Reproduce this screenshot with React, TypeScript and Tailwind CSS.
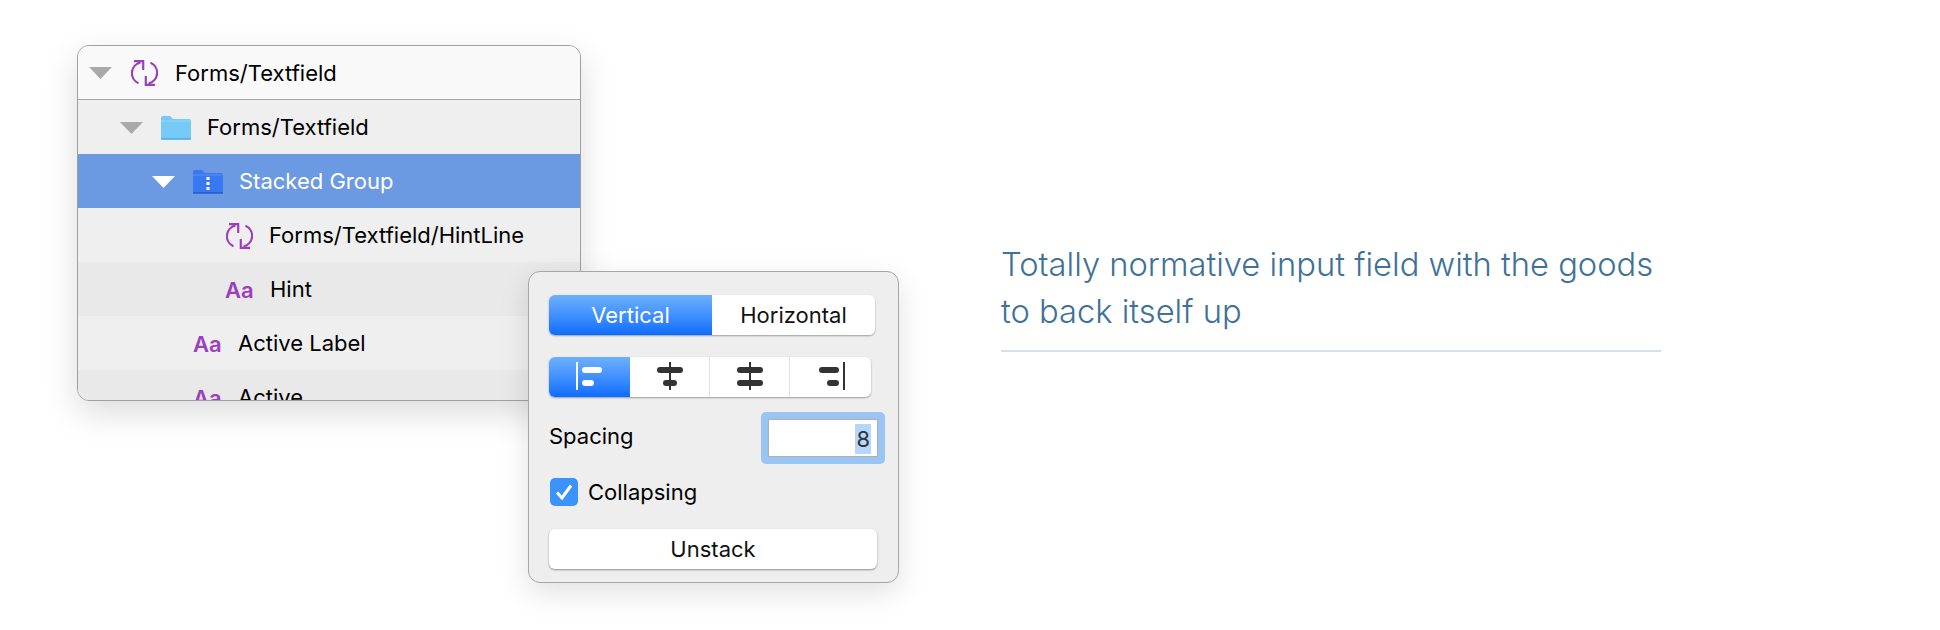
import type { FC, ReactNode } from 'react';

const SyncIcon: FC = () => (
  <svg width="27" height="26" viewBox="0 0 27 26" fill="none" stroke="#9b3fbd" strokeWidth="2.2" className="shrink-0">
    <path d="M9.5 2.4 A 11 11 0 0 0 7.5 23.2" />
    <path d="M3 1.1 H12.2 V10" />
    <path d="M17.5 23.6 A 11 11 0 0 0 19.5 2.8" />
    <path d="M24 24.9 H14.8 V16" />
  </svg>
);

const Caret: FC<{ white?: boolean }> = ({ white }) => (
  <svg width="23" height="12" viewBox="0 0 23 12" className="shrink-0">
    <path d="M0 0 H23 L11.5 12 Z" fill={white ? '#ffffff' : '#a9a9a9'} />
  </svg>
);

const Folder: FC<{ stacked?: boolean }> = ({ stacked }) => (
  <svg width="30" height="24" viewBox="0 0 30 24" className="shrink-0">
    <path
      d="M0 2 Q0 0 2 0 H9 L12 3 H28 Q30 3 30 5 V22 Q30 24 28 24 H2 Q0 24 0 22 Z"
      fill={stacked ? '#3a78f2' : '#75caf8'}
    />
    <path d="M0 5 H30" stroke={stacked ? '#5a8ef5' : '#93d6fa'} strokeWidth="1" />
    <path d="M0 22.8 H30" stroke={stacked ? '#2a5fd0' : '#5ab0e0'} strokeWidth="1.5" />
    {stacked && (
      <g fill="#ffffff">
        <rect x="13.5" y="7" width="3" height="3" />
        <rect x="13.5" y="12" width="3" height="3" />
        <rect x="13.5" y="17" width="3" height="3" />
      </g>
    )}
  </svg>
);

const TextIcon: FC = () => (
  <span className="w-[29px] shrink-0 text-[22px] font-semibold text-[#9b3fbd] leading-none">Aa</span>
);

const Row: FC<{ indent: string; className?: string; text: string; icon: ReactNode; caret?: ReactNode }> = ({
  indent,
  className,
  text,
  icon,
  caret,
}) => (
  <div className={`flex items-center h-[54px] shrink-0 pt-[1px] text-[22px] text-black ${indent} ${className ?? ''}`}>
    {caret && <span className="flex w-[41px] shrink-0">{caret}</span>}
    {icon}
    <span className="ml-[16px] whitespace-nowrap">{text}</span>
  </div>
);

const AlignIcon: FC<{ kind: 'left' | 'c1' | 'c2' | 'right'; light?: boolean }> = ({ kind, light }) => {
  const c = light ? '#ffffff' : '#333333';
  return (
    <svg width="28" height="30" viewBox="0 0 28 30">
      {kind === 'left' && (
        <g fill={c}>
          <rect x="0" y="0" width="2" height="28" />
          <rect x="6" y="5" width="20" height="6" rx="3" />
          <rect x="6" y="18" width="12" height="6" rx="3" />
        </g>
      )}
      {kind === 'c1' && (
        <g fill={c}>
          <rect x="13" y="0" width="2" height="28" />
          <rect x="1" y="5" width="26" height="6" rx="3" />
          <rect x="7" y="18" width="14" height="6" rx="3" />
        </g>
      )}
      {kind === 'c2' && (
        <g fill={c}>
          <rect x="13" y="0" width="2" height="28" />
          <rect x="1" y="5" width="26" height="6" rx="3" />
          <rect x="1" y="18" width="26" height="6" rx="3" />
        </g>
      )}
      {kind === 'right' && (
        <g fill={c}>
          <rect x="26" y="0" width="2" height="28" />
          <rect x="2" y="5" width="20" height="6" rx="3" />
          <rect x="10" y="18" width="12" height="6" rx="3" />
        </g>
      )}
    </svg>
  );
};

const Popover: FC = () => (
  <div className="absolute left-[451px] top-[226px] w-[371px] h-[312px] rounded-[12px] border border-[#a6a6a6] bg-[#eeeeee] shadow-[0_10px_30px_rgba(0,0,0,0.12)] px-[20px] pt-[23px] text-[22px] text-black">
    <div className="flex w-[326px] h-[40px] rounded-[6px] overflow-hidden shadow-[0_1px_2px_rgba(0,0,0,0.35)]">
      <div className="flex w-[163px] items-center justify-center bg-gradient-to-b from-[#6cb0fd] to-[#0a6cff] text-white">Vertical</div>
      <div className="flex flex-1 items-center justify-center bg-white text-[#111111]">Horizontal</div>
    </div>
    <div className="flex w-[322px] h-[40px] mt-[22px] rounded-[6px] overflow-hidden shadow-[0_1px_2px_rgba(0,0,0,0.35)] bg-white">
      <div className="flex w-[81px] items-center justify-center bg-gradient-to-b from-[#6cb0fd] to-[#0a6cff]">
        <AlignIcon kind="left" light />
      </div>
      <div className="flex w-[80px] items-center justify-center border-r border-[#e2e2e2]">
        <AlignIcon kind="c1" />
      </div>
      <div className="flex w-[80px] items-center justify-center border-r border-[#e2e2e2]">
        <AlignIcon kind="c2" />
      </div>
      <div className="flex flex-1 items-center justify-center">
        <AlignIcon kind="right" />
      </div>
    </div>
    <div className="flex items-center justify-between mt-[15px] h-[52px] w-[336px]">
      <span className="-mt-[4px]">Spacing</span>
      <div className="w-[124px] h-[52px] rounded-[5px] bg-[#99c4f3] p-[7px]">
        <div className="flex h-full items-center justify-end border border-[#b0b0b0] bg-white pr-[6px]">
          <span className="bg-[#b3d7ff] px-[1px] text-[#333333] leading-[30px] mt-[2px]">8</span>
        </div>
      </div>
    </div>
    <div className="flex items-center mt-[14px] h-[28px]">
      <span className="flex ml-[1px] h-[28px] w-[28px] items-center justify-center rounded-[5px] bg-[#3b93fb]">
        <svg width="18" height="16" viewBox="0 0 18 16" fill="none" stroke="#ffffff" strokeWidth="3">
          <path d="M2 8.5 L7 14 L16 1.5" />
        </svg>
      </span>
      <span className="ml-[10px]">Collapsing</span>
    </div>
    <div className="flex items-center justify-center mt-[23px] w-[328px] h-[40px] rounded-[6px] bg-white text-[#111111] shadow-[0_1px_2px_rgba(0,0,0,0.4)]">
      Unstack
    </div>
  </div>
);

const App: FC = () => (
  <div className="flex w-[1940px] h-[630px] overflow-hidden bg-white pl-[77px] pt-[45px] font-['Inter','Liberation_Sans',sans-serif]">
    <div className="relative w-[504px] shrink-0">
      <div className="flex flex-col w-[504px] h-[356px] overflow-hidden rounded-[12px] border border-[#a0a0a0] bg-[#efefef] shadow-[0_12px_34px_rgba(0,0,0,0.14)]">
        <div className="flex items-center h-[54px] shrink-0 pt-[1px] pl-[11px] border-b border-[#a6a6a6] bg-[#f9f9f9] text-[22px] text-black">
          <span className="flex w-[42px] shrink-0"><Caret /></span>
          <SyncIcon />
          <span className="ml-[17px] whitespace-nowrap">Forms/Textfield</span>
        </div>
        <Row indent="pl-[42px]" text="Forms/Textfield" icon={<Folder />} caret={<Caret />} />
        <Row indent="pl-[74px]" className="bg-[#6b9ae3] !text-white" text="Stacked Group" icon={<Folder stacked />} caret={<Caret white />} />
        <Row indent="pl-[148px]" text="Forms/Textfield/HintLine" icon={<SyncIcon />} />
        <Row indent="pl-[147px]" className="bg-[#e9e9e9]" text="Hint" icon={<TextIcon />} />
        <Row indent="pl-[115px]" text="Active Label" icon={<TextIcon />} />
        <Row indent="pl-[115px]" className="bg-[#e9e9e9]" text="Active" icon={<TextIcon />} />
      </div>
      <Popover />
    </div>
    <div className="ml-[420px] mt-[196px] w-[660px] h-[111px] border-b-2 border-[#d5e0ea]">
      <p className="text-[32.7px] leading-[47px] font-light text-[#3f7199] whitespace-nowrap">
        Totally normative input field with the goods
        <br />
        to back itself up
      </p>
    </div>
  </div>
);

export default App;
